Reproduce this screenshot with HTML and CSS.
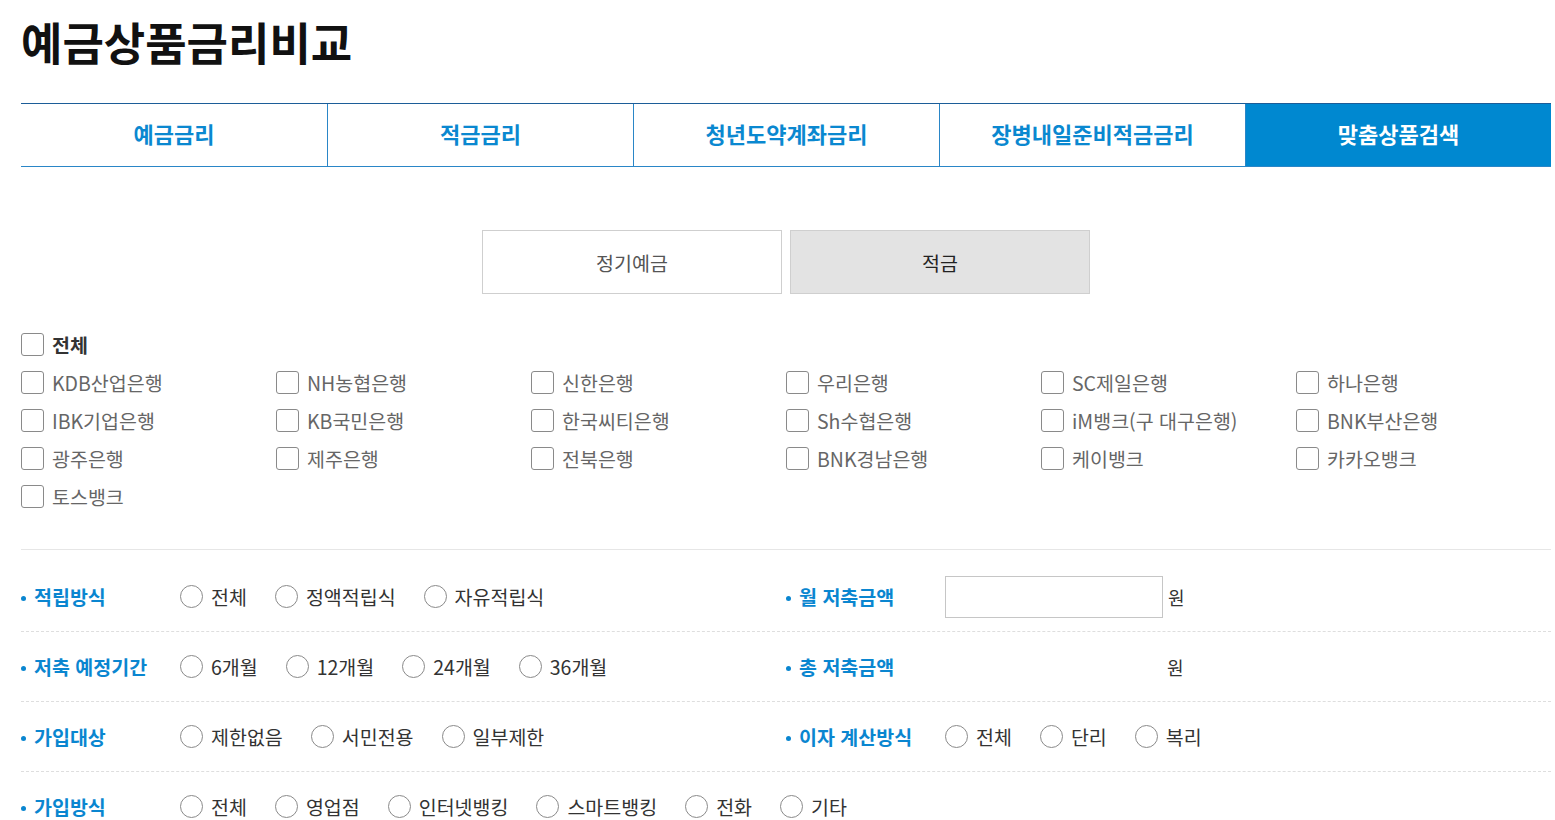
FILE: index.html
```html
<!DOCTYPE html>
<html lang="ko">
<head>
    <meta charset="UTF-8">
    <meta name="viewport" content="width=device-width, initial-scale=1.0">
    <title>예금상품금리비교</title>
    <link rel="stylesheet" href="styles.css">
</head>
<body>
    <div class="wrap">
        <h1 class="title">예금상품금리비교</h1>

        <ul class="tabs">
            <li>예금금리</li>
            <li>적금금리</li>
            <li>청년도약계좌금리</li>
            <li>장병내일준비적금금리</li>
            <li class="on">맞춤상품검색</li>
        </ul>

        <div class="kind">
            <button class="kind-btn">정기예금</button>
            <button class="kind-btn on">적금</button>
        </div>

        <div class="banks">
            <label class="chk all"><input type="checkbox"><span>전체</span></label>
            <div class="bank-grid">
                <label class="chk"><input type="checkbox"><span>KDB산업은행</span></label>
                <label class="chk"><input type="checkbox"><span>NH농협은행</span></label>
                <label class="chk"><input type="checkbox"><span>신한은행</span></label>
                <label class="chk"><input type="checkbox"><span>우리은행</span></label>
                <label class="chk"><input type="checkbox"><span>SC제일은행</span></label>
                <label class="chk"><input type="checkbox"><span>하나은행</span></label>
                <label class="chk"><input type="checkbox"><span>IBK기업은행</span></label>
                <label class="chk"><input type="checkbox"><span>KB국민은행</span></label>
                <label class="chk"><input type="checkbox"><span>한국씨티은행</span></label>
                <label class="chk"><input type="checkbox"><span>Sh수협은행</span></label>
                <label class="chk"><input type="checkbox"><span>iM뱅크(구 대구은행)</span></label>
                <label class="chk"><input type="checkbox"><span>BNK부산은행</span></label>
                <label class="chk"><input type="checkbox"><span>광주은행</span></label>
                <label class="chk"><input type="checkbox"><span>제주은행</span></label>
                <label class="chk"><input type="checkbox"><span>전북은행</span></label>
                <label class="chk"><input type="checkbox"><span>BNK경남은행</span></label>
                <label class="chk"><input type="checkbox"><span>케이뱅크</span></label>
                <label class="chk"><input type="checkbox"><span>카카오뱅크</span></label>
                <label class="chk"><input type="checkbox"><span>토스뱅크</span></label>
            </div>
        </div>

        <div class="form">
            <div class="row">
                <div class="field">
                    <div class="label">적립방식</div>
                    <div class="opts">
                        <label class="rad"><input type="radio" name="m"><span>전체</span></label>
                        <label class="rad"><input type="radio" name="m"><span>정액적립식</span></label>
                        <label class="rad"><input type="radio" name="m"><span>자유적립식</span></label>
                    </div>
                </div>
                <div class="field">
                    <div class="label">월 저축금액</div>
                    <div class="opts">
                        <input type="text" class="amount">
                        <span class="won">원</span>
                    </div>
                </div>
            </div>
            <div class="row">
                <div class="field">
                    <div class="label">저축 예정기간</div>
                    <div class="opts">
                        <label class="rad"><input type="radio" name="p"><span>6개월</span></label>
                        <label class="rad"><input type="radio" name="p"><span>12개월</span></label>
                        <label class="rad"><input type="radio" name="p"><span>24개월</span></label>
                        <label class="rad"><input type="radio" name="p"><span>36개월</span></label>
                    </div>
                </div>
                <div class="field">
                    <div class="label">총 저축금액</div>
                    <div class="opts">
                        <span class="total"></span>
                        <span class="won">원</span>
                    </div>
                </div>
            </div>
            <div class="row">
                <div class="field">
                    <div class="label">가입대상</div>
                    <div class="opts">
                        <label class="rad"><input type="radio" name="t"><span>제한없음</span></label>
                        <label class="rad"><input type="radio" name="t"><span>서민전용</span></label>
                        <label class="rad"><input type="radio" name="t"><span>일부제한</span></label>
                    </div>
                </div>
                <div class="field">
                    <div class="label">이자 계산방식</div>
                    <div class="opts">
                        <label class="rad"><input type="radio" name="i"><span>전체</span></label>
                        <label class="rad"><input type="radio" name="i"><span>단리</span></label>
                        <label class="rad"><input type="radio" name="i"><span>복리</span></label>
                    </div>
                </div>
            </div>
            <div class="row">
                <div class="field wide">
                    <div class="label">가입방식</div>
                    <div class="opts">
                        <label class="rad"><input type="radio" name="j"><span>전체</span></label>
                        <label class="rad"><input type="radio" name="j"><span>영업점</span></label>
                        <label class="rad"><input type="radio" name="j"><span>인터넷뱅킹</span></label>
                        <label class="rad"><input type="radio" name="j"><span>스마트뱅킹</span></label>
                        <label class="rad"><input type="radio" name="j"><span>전화</span></label>
                        <label class="rad"><input type="radio" name="j"><span>기타</span></label>
                    </div>
                </div>
            </div>
        </div>
    </div>
</body>
</html>
```

FILE: styles.css
```css
body{
    margin: 0;
    font-family: "Noto Sans CJK KR", "Noto Sans", sans-serif;
    color: #333;
    background: #fff;
}

.wrap{
    width: 1530px;
    padding-left: 21px;
}

.title{
    margin: 17px 0 36px;
    font-size: 45px;
    line-height: 50px;
    font-weight: 700;
    color: #111;
}

.tabs{
    list-style: none;
    margin: 0;
    padding: 0;
    display: grid;
    grid-template-columns: repeat(5, 1fr);
    border-top: 1px solid #1c5d98;
    border-bottom: 1px solid #2a86c7;
}

.tabs li{
    height: 58px;
    padding-bottom: 4px;
    line-height: 58px;
    text-align: center;
    font-size: 22px;
    font-weight: 700;
    color: #0a88d0;
    border-left: 1px solid #2a86c7;
}

.tabs li:first-child{
    border-left: none;
}

.tabs li.on{
    background: #0088d0;
    color: #fff;
}

.kind{
    display: flex;
    justify-content: center;
    gap: 8px;
    margin-top: 63px;
}

.kind-btn{
    width: 300px;
    height: 64px;
    border: 1px solid #cfcfcf;
    background: #fff;
    font-family: inherit;
    font-size: 19.5px;
    color: #555;
    cursor: pointer;
}

.kind-btn.on{
    background: #e3e3e3;
    color: #222;
}

.banks{
    margin-top: 31px;
    padding-bottom: 34px;
    border-bottom: 1px solid #e6e6e6;
}

.bank-grid{
    display: grid;
    grid-template-columns: repeat(6, 255px);
}

.chk, .rad{
    display: flex;
    align-items: center;
    height: 38px;
    font-size: 19.5px;
    color: #666;
    white-space: nowrap;
    cursor: pointer;
}

.chk input, .rad input{
    appearance: none;
    -webkit-appearance: none;
    margin: 0 8px 0 0;
    width: 23px;
    height: 23px;
    border: 1.5px solid #8a8a8a;
    border-radius: 3px;
    background: #fff;
    flex-shrink: 0;
}

.chk.all span{
    font-weight: 700;
    color: #333;
}

.form{
    padding-top: 12px;
}

.row{
    display: grid;
    grid-template-columns: 765px 765px;
    height: 69px;
    border-bottom: 1px dashed #dedede;
}

.row:last-child{
    border-bottom: none;
}

.field{
    display: flex;
    align-items: center;
}

.field.wide{
    grid-column: span 2;
}

.label{
    width: 159px;
    flex-shrink: 0;
    display: flex;
    align-items: center;
    font-size: 19.5px;
    font-weight: 700;
    color: #0a86d0;
    white-space: nowrap;
}

.label::before{
    content: "";
    width: 5px;
    height: 5px;
    border-radius: 50%;
    background: #0a86d0;
    margin-right: 8px;
    margin-top: 3px;
}

.opts{
    display: flex;
    align-items: center;
    gap: 28px;
}

.rad{
    color: #333;
}

.rad input{
    border-radius: 50%;
}

.amount{
    width: 218px;
    height: 42px;
    box-sizing: border-box;
    border: 1px solid #c6c6c6;
    margin-right: -23px;
}

.total{
    width: 218px;
    margin-right: -24px;
}

.won{
    font-size: 18px;
    color: #333;
}
```
